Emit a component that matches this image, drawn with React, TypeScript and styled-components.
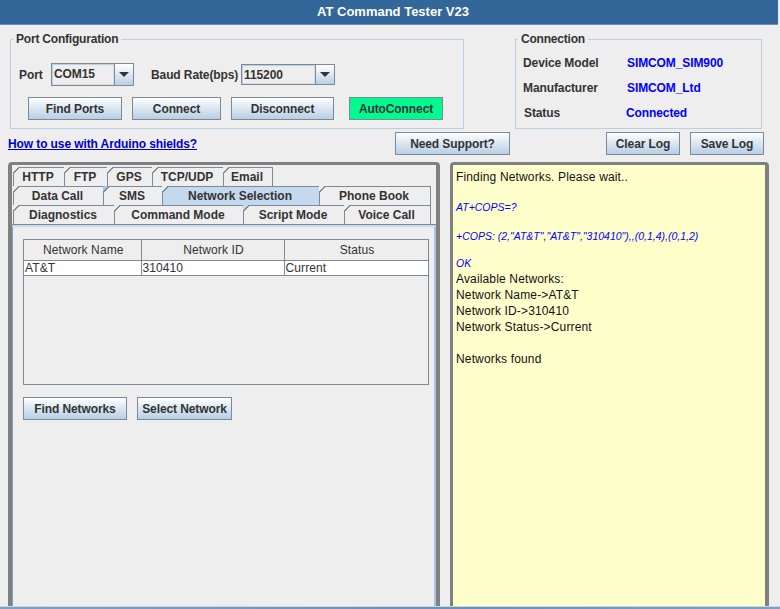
import React from 'react';
import styled, { createGlobalStyle } from 'styled-components';

const GlobalStyle = createGlobalStyle`
  html, body {
    margin: 0;
    padding: 0;
    background: #eeeeee;
  }
  * {
    box-sizing: border-box;
  }
`;

const Window = styled.div`
  width: 780px;
  height: 609px;
  display: flex;
  flex-direction: column;
  overflow: hidden;
  background: #eeeeee;
  font-family: 'Liberation Sans', Arial, sans-serif;
  font-size: 12px;
  font-weight: 700;
  letter-spacing: -0.1px;
  color: #333333;
`;

const TitleBar = styled.div`
  width: 778px;
  height: 25px;
  flex: none;
  padding-left: 8px;
  background: #336699;
  border-bottom: 1px solid #6b8fb3;
  color: #ffffff;
  font-size: 13px;
  letter-spacing: 0;
  line-height: 24px;
  text-align: center;
`;

const TopRow = styled.div`
  display: flex;
  flex: none;
  gap: 51px;
  margin-top: 6px;
  padding-left: 10px;
`;

const Group = styled.fieldset<{ $width: number }>`
  width: ${({ $width }) => $width}px;
  height: 98px;
  margin: 0;
  padding: 0 8px;
  min-width: 0;
  border: 1px solid #b8cfe5;
`;

const GroupTitle = styled.legend`
  margin-left: -6px;
  padding: 0 3px;
  font-size: 12px;
  letter-spacing: -0.2px;
  line-height: 16px;
`;

const PortRow = styled.div`
  display: flex;
  align-items: center;
  height: 23px;
  margin-top: 16px;
`;

const FieldLabel = styled.span<{ $width: number; $gap?: number }>`
  width: ${({ $width }) => $width}px;
  margin-left: ${({ $gap }) => $gap ?? 0}px;
`;

const Combo = styled.div<{ $width: number; $height: number }>`
  display: flex;
  width: ${({ $width }) => $width}px;
  height: ${({ $height }) => $height}px;
  border: 1px solid #7a8a99;
`;

const ComboValue = styled.div`
  flex: 1;
  padding-left: 1px;
  background: #eeeeee;
  border: 1px solid #b8cfe5;
  border-right-color: #dddddd;
  border-bottom-color: #dddddd;
  line-height: 19px;
`;

const ComboArrow = styled.div`
  display: flex;
  align-items: center;
  justify-content: center;
  width: 19px;
  background: linear-gradient(#ffffff, #dde8f3 50%, #b8cfe5);
  border-left: 1px solid #7a8a99;

  &::after {
    content: '';
    border-left: 5px solid transparent;
    border-right: 5px solid transparent;
    border-top: 5px solid #333333;
  }
`;

const ButtonRow = styled.div<{ $gap: number; $indent?: number; $top: number }>`
  display: flex;
  gap: ${({ $gap }) => $gap}px;
  margin-top: ${({ $top }) => $top}px;
  margin-left: ${({ $indent }) => $indent ?? 0}px;
`;

const Button = styled.button<{ $width: number; $green?: boolean; $gap?: number }>`
  width: ${({ $width }) => $width}px;
  height: 23px;
  flex: none;
  margin-left: ${({ $gap }) => $gap ?? 0}px;
  padding: 0;
  border: 1px solid #7a8a99;
  background: ${({ $green }) =>
    $green ? '#00fa8f' : 'linear-gradient(#ffffff, #dde8f3 45%, #b8cfe5)'};
  color: #333333;
  font-family: inherit;
  font-size: 12px;
  font-weight: 700;
  letter-spacing: -0.1px;
`;

const InfoGrid = styled.div`
  display: grid;
  grid-template-columns: 104px 1fr;
  grid-auto-rows: 25px;
  align-items: center;
  margin-top: 3px;
  margin-left: -1px;
`;

const InfoValue = styled.span<{ $shift?: number }>`
  margin-left: ${({ $shift }) => $shift ?? 0}px;
  color: #0000ff;
`;

const InfoLabel = styled.span<{ $shift?: number }>`
  margin-left: ${({ $shift }) => $shift ?? 0}px;
`;

const ActionRow = styled.div`
  display: flex;
  flex: none;
  align-items: center;
  height: 23px;
  margin-top: 3px;
  padding-left: 8px;
`;

const HelpLink = styled.a`
  width: 387px;
  color: #0000cc;
  text-decoration: underline;
`;

const LogButtons = styled.div`
  display: flex;
  gap: 10px;
  margin-left: 96px;
`;

const Workspace = styled.div`
  display: flex;
  flex: 1;
  min-height: 0;
  gap: 10px;
  margin-top: 7px;
  padding-left: 8px;
  overflow: hidden;
`;

const TabsPanel = styled.div`
  display: flex;
  flex-direction: column;
  width: 432px;
  height: 460px;
  padding-top: 2px;
  border: 4px solid #808080;
  border-top-width: 3px;
  border-radius: 4px 4px 0 0;
`;

const TabRow = styled.div`
  display: flex;
  flex: none;
  height: 19px;
  margin-left: 1px;
`;

const Tab = styled.div<{ $width: number; $active?: boolean; $corner?: string }>`
  position: relative;
  flex: none;
  width: ${({ $width }) => $width}px;
  padding-right: 2px;
  border-top: 1px solid #7a8a99;
  border-left: 1px solid #7a8a99;
  background: ${({ $active }) => ($active ? '#c4d9ee' : '#eeeeee')};
  letter-spacing: 0;
  line-height: 18px;
  text-align: center;

  &:last-child {
    border-right: 1px solid #7a8a99;
  }

  &::before {
    content: '';
    position: absolute;
    top: -1px;
    left: -1px;
    width: 6px;
    height: 6px;
    background: linear-gradient(
      135deg,
      ${({ $corner }) => $corner ?? '#eeeeee'} 0 44%,
      #7a8a99 44% 62%,
      transparent 62%
    );
  }
`;

const TabPane = styled.div`
  flex: 1;
  padding: 14px 0 0 11px;
  border-top: 1px solid #7a8a99;
  box-shadow: inset 0 2px 0 #c4d9ee, inset 1px 0 0 #7f9fd0, inset -2px 0 0 #a9c3e3;
`;

const TableBox = styled.div`
  width: 406px;
  height: 146px;
  border: 1px solid #7a8a99;
`;

const NetworkTable = styled.table`
  width: 404px;
  table-layout: fixed;
  border-collapse: collapse;
  font-weight: 400;
  letter-spacing: 0.1px;
`;

const HeadCell = styled.th<{ $width: number }>`
  width: ${({ $width }) => $width}px;
  height: 20px;
  padding: 0 0 0 2px;
  border-right: 1px solid #7a8a99;
  border-bottom: 1px solid #7a8a99;
  background: #eeeeee;
  font-weight: 400;
  text-align: center;
`;

const Cell = styled.td`
  height: 15px;
  padding: 0 0 0 1px;
  border-right: 1px solid #7a8a99;
  border-bottom: 1px solid #7a8a99;
  background: #ffffff;
  line-height: 14px;
`;

const LogPanel = styled.div`
  width: 319px;
  height: 460px;
  padding: 4px 3px 3px;
  background: #ffffcc;
  border: 3px solid #808080;
  border-right-width: 4px;
  border-radius: 4px 4px 0 0;
  color: #111111;
  font-weight: 400;
  letter-spacing: 0.15px;
`;

const LogLine = styled.div<{ $height?: number }>`
  height: ${({ $height }) => $height ?? 16}px;
  line-height: ${({ $height }) => $height ?? 16}px;
  white-space: pre;
`;

const LogCommand = styled(LogLine)`
  color: #0000ff;
  font-size: 10.5px;
  font-style: italic;
  letter-spacing: 0;
`;

const BottomEdge = styled.div`
  flex: none;
  height: 3px;
  background: linear-gradient(90deg, #7da0c4, #6b90b8 60%, #7da0c4);
  border-top: 1px solid #c9d6e3;
`;

const tabRows = [
  [
    { label: 'HTTP', width: 51 },
    { label: 'FTP', width: 43 },
    { label: 'GPS', width: 45 },
    { label: 'TCP/UDP', width: 71 },
    { label: 'Email', width: 50 },
  ],
  [
    { label: 'Data Call', width: 90 },
    { label: 'SMS', width: 59, corner: '#a9c3e3' },
    { label: 'Network Selection', width: 157, active: true },
    { label: 'Phone Book', width: 112 },
  ],
  [
    { label: 'Diagnostics', width: 101 },
    { label: 'Command Mode', width: 129 },
    { label: 'Script Mode', width: 101, corner: '#c4d9ee' },
    { label: 'Voice Call', width: 87 },
  ],
];

const App: React.FC = () => {
  return (
    <Window>
      <GlobalStyle />
      <TitleBar>AT Command Tester V23</TitleBar>

      <TopRow>
        <Group $width={454}>
          <GroupTitle>Port Configuration</GroupTitle>
          <PortRow>
            <FieldLabel $width={32}>Port</FieldLabel>
            <Combo $width={83} $height={23}>
              <ComboValue>COM15</ComboValue>
              <ComboArrow />
            </Combo>
            <FieldLabel $width={90} $gap={17}>Baud Rate(bps)</FieldLabel>
            <Combo $width={94} $height={21}>
              <ComboValue>115200</ComboValue>
              <ComboArrow />
            </Combo>
          </PortRow>
          <ButtonRow $gap={10} $indent={9} $top={11}>
            <Button $width={94}>Find Ports</Button>
            <Button $width={89}>Connect</Button>
            <Button $width={103}>Disconnect</Button>
            <Button $width={94} $green $gap={5}>AutoConnect</Button>
          </ButtonRow>
        </Group>

        <Group $width={247}>
          <GroupTitle>Connection</GroupTitle>
          <InfoGrid>
            <InfoLabel>Device Model</InfoLabel>
            <InfoValue>SIMCOM_SIM900</InfoValue>
            <InfoLabel>Manufacturer</InfoLabel>
            <InfoValue>SIMCOM_Ltd</InfoValue>
            <InfoLabel $shift={1}>Status</InfoLabel>
            <InfoValue $shift={-1}>Connected</InfoValue>
          </InfoGrid>
        </Group>
      </TopRow>

      <ActionRow>
        <HelpLink href="#">How to use with Arduino shields?</HelpLink>
        <Button $width={115}>Need Support?</Button>
        <LogButtons>
          <Button $width={74}>Clear Log</Button>
          <Button $width={74}>Save Log</Button>
        </LogButtons>
      </ActionRow>

      <Workspace>
        <TabsPanel>
          {tabRows.map((row, index) => (
            <TabRow key={index}>
              {row.map((tab) => (
                <Tab key={tab.label} $width={tab.width} $active={tab.active} $corner={tab.corner}>
                  {tab.label}
                </Tab>
              ))}
            </TabRow>
          ))}
          <TabPane>
            <TableBox>
              <NetworkTable>
                <thead>
                  <tr>
                    <HeadCell $width={117}>Network Name</HeadCell>
                    <HeadCell $width={143}>Network ID</HeadCell>
                    <HeadCell $width={144}>Status</HeadCell>
                  </tr>
                </thead>
                <tbody>
                  <tr>
                    <Cell>AT&amp;T</Cell>
                    <Cell>310410</Cell>
                    <Cell>Current</Cell>
                  </tr>
                </tbody>
              </NetworkTable>
            </TableBox>
            <ButtonRow $gap={10} $top={12}>
              <Button $width={104}>Find Networks</Button>
              <Button $width={95}>Select Network</Button>
            </ButtonRow>
          </TabPane>
        </TabsPanel>

        <LogPanel>
          <LogLine>Finding Networks. Please wait..</LogLine>
          <LogLine $height={14} />
          <LogCommand>AT+COPS=?</LogCommand>
          <LogLine $height={13} />
          <LogCommand>+COPS: (2,"AT&amp;T","AT&amp;T","310410"),,(0,1,4),(0,1,2)</LogCommand>
          <LogLine $height={11} />
          <LogCommand>OK</LogCommand>
          <LogLine>Available Networks:</LogLine>
          <LogLine>Network Name-&gt;AT&amp;T</LogLine>
          <LogLine>Network ID-&gt;310410</LogLine>
          <LogLine>Network Status-&gt;Current</LogLine>
          <LogLine />
          <LogLine>Networks found</LogLine>
        </LogPanel>
      </Workspace>

      <BottomEdge />
    </Window>
  );
};

export default App;
